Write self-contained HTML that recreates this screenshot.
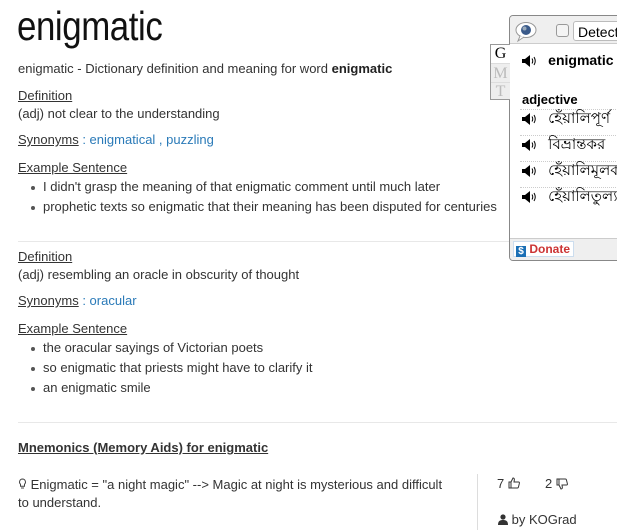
<!DOCTYPE html>
<html><head><meta charset="utf-8"><style>
*{margin:0;padding:0;box-sizing:border-box}
body{width:617px;height:530px;overflow:hidden;background:#fff;font-family:"Liberation Sans",Arial,sans-serif;font-size:13px;color:#333;position:relative}
.a{position:absolute;white-space:nowrap}
.u{text-decoration:underline}
.l{color:#2a7ab8}
.b{font-weight:bold;color:#222}
.bul::before{content:"";position:absolute;left:-12px;top:7px;width:4px;height:4px;border-radius:2px;background:#555}
hr{position:absolute;border:0;border-top:1px solid #e8e8e8}
#pop{position:absolute;left:509px;top:15px;width:120px;height:246px;border:1px solid #888;border-radius:4px;background:#fff;overflow:hidden}
.sp{display:inline-block;vertical-align:middle}
.row{position:absolute;left:12px;width:110px;height:26px;font-family:"Liberation Sans","Noto Sans CJK SC",sans-serif;font-size:15px;color:#000}
</style></head><body>
<div class="a" style="left:17px;top:3px;font-size:41px;color:#111;transform:scaleX(.85);transform-origin:0 0;letter-spacing:-0.5px">enigmatic</div>
<div class="a" style="left:18px;top:61px">enigmatic - Dictionary definition and meaning for word <b class="b">enigmatic</b></div>
<div class="a u" style="left:18px;top:88px">Definition</div>
<div class="a" style="left:18px;top:106px">(adj) not clear to the understanding</div>
<div class="a" style="left:18px;top:132px"><span class="u">Synonyms</span> <span class="l">: enigmatical , puzzling</span></div>
<div class="a u" style="left:18px;top:160px">Example Sentence</div>
<div class="a bul" style="left:43px;top:179px">I didn't grasp the meaning of that enigmatic comment until much later</div>
<div class="a bul" style="left:43px;top:199px">prophetic texts so enigmatic that their meaning has been disputed for centuries</div>
<hr style="left:18px;top:241px;width:599px">
<div class="a u" style="left:18px;top:249px">Definition</div>
<div class="a" style="left:18px;top:267px">(adj) resembling an oracle in obscurity of thought</div>
<div class="a" style="left:18px;top:293px"><span class="u">Synonyms</span> <span class="l">: oracular</span></div>
<div class="a u" style="left:18px;top:321px">Example Sentence</div>
<div class="a bul" style="left:43px;top:340px">the oracular sayings of Victorian poets</div>
<div class="a bul" style="left:43px;top:360px">so enigmatic that priests might have to clarify it</div>
<div class="a bul" style="left:43px;top:380px">an enigmatic smile</div>
<hr style="left:18px;top:422px;width:599px">
<div class="a u" style="left:18px;top:440px;font-weight:bold;color:#333">Mnemonics (Memory Aids) for enigmatic</div>
<div class="a" style="left:18px;top:476px;line-height:18px;white-space:normal;width:438px"><svg width="9" height="12" viewBox="0 0 9 12" style="vertical-align:-1px"><path d="M4.5 1a3 3 0 0 0-2 5.2v2h4v-2A3 3 0 0 0 4.5 1z M3 10h3" fill="none" stroke="#444" stroke-width="1"/></svg> Enigmatic = "a night magic" --&gt; Magic at night is mysterious and difficult to understand.</div>
<div style="position:absolute;left:477px;top:474px;width:1px;height:56px;background:#ddd"></div>
<div class="a" style="left:497px;top:476px">7 <svg width="12" height="12" viewBox="0 0 12 12" style="vertical-align:-1px"><path d="M1 5h2v6H1z M3 5l2-4c1 0 1.5.6 1.3 2L6 5h4.5c.8 0 1 .6.9 1.2l-1 4c-.2.6-.6.8-1 .8H3" fill="none" stroke="#333"/></svg></div>
<div class="a" style="left:545px;top:476px">2 <svg width="12" height="12" viewBox="0 0 12 12" style="vertical-align:-2px"><path d="M1 1h2v6H1z M3 7l2 4c1 0 1.5-.6 1.3-2L6 7h4.5c.8 0 1-.6.9-1.2l-1-4C10.2 1.2 9.8 1 9.4 1H3" fill="none" stroke="#333"/></svg></div>
<div class="a" style="left:498px;top:512px"><svg width="10" height="11" viewBox="0 0 10 11" style="vertical-align:-1px"><circle cx="5" cy="3" r="2.6" fill="#333"/><path d="M0 11c0-4 2-5 5-5s5 1 5 5z" fill="#333"/></svg> by KOGrad</div>

<div id="pop">
 <div style="position:absolute;left:0;top:0;width:120px;height:28px;background:#efefef;border-bottom:1px solid #ccc"></div>
 <svg style="position:absolute;left:4px;top:5px" width="24" height="22" viewBox="0 0 24 22"><ellipse cx="12" cy="9" rx="10" ry="7.5" fill="#fff" stroke="#999"/><path d="M6 15l-2 5 6-4" fill="#fff" stroke="#999"/><circle cx="12" cy="9" r="5" fill="#3a5a8a"/><circle cx="10.5" cy="7.5" r="2" fill="#9ab"/></svg>
 <div style="position:absolute;left:46px;top:8px;width:13px;height:13px;border:1px solid #999;border-radius:3px;background:#f4f4f4"></div>
 <div style="position:absolute;left:63px;top:5px;width:70px;height:20px;border:1px solid #bbb;border-radius:3px;background:#fff;font-size:14px;padding:2px 0 0 4px;color:#000">Detect</div>
 <div class="row" style="top:36px"><svg class="sp" width="14" height="12" viewBox="0 0 14 12"><path d="M0 4h3l5-4v12L3 8H0z" fill="#000"/><path d="M10 3.5q1.5 2.5 0 5M12 2q2.5 4 0 8" fill="none" stroke="#000"/></svg> <b style="margin-left:8px;font-size:14px">enigmatic</b></div>
 <div class="a" style="left:12px;top:76px;font-weight:bold;color:#000">adjective</div>
 <div style="position:absolute;left:10px;top:93px;width:110px;border-top:1px dotted #ccc"></div>
 <div class="row" style="top:91px"><svg class="sp" width="14" height="12" viewBox="0 0 14 12"><path d="M0 4h3l5-4v12L3 8H0z" fill="#000"/><path d="M10 3.5q1.5 2.5 0 5M12 2q2.5 4 0 8" fill="none" stroke="#000"/></svg> <span style="margin-left:8px">হেঁয়ালিপূর্ণ</span></div>
 <div style="position:absolute;left:10px;top:119px;width:110px;border-top:1px dotted #ccc"></div>
 <div class="row" style="top:117px"><svg class="sp" width="14" height="12" viewBox="0 0 14 12"><path d="M0 4h3l5-4v12L3 8H0z" fill="#000"/><path d="M10 3.5q1.5 2.5 0 5M12 2q2.5 4 0 8" fill="none" stroke="#000"/></svg> <span style="margin-left:8px">বিভ্রান্তকর</span></div>
 <div style="position:absolute;left:10px;top:145px;width:110px;border-top:1px dotted #ccc"></div>
 <div class="row" style="top:143px"><svg class="sp" width="14" height="12" viewBox="0 0 14 12"><path d="M0 4h3l5-4v12L3 8H0z" fill="#000"/><path d="M10 3.5q1.5 2.5 0 5M12 2q2.5 4 0 8" fill="none" stroke="#000"/></svg> <span style="margin-left:8px">হেঁয়ালিমূলক</span></div>
 <div style="position:absolute;left:10px;top:171px;width:110px;border-top:1px dotted #ccc"></div>
 <div class="row" style="top:169px"><svg class="sp" width="14" height="12" viewBox="0 0 14 12"><path d="M0 4h3l5-4v12L3 8H0z" fill="#000"/><path d="M10 3.5q1.5 2.5 0 5M12 2q2.5 4 0 8" fill="none" stroke="#000"/></svg> <span style="margin-left:8px">হেঁয়ালিতুল্য</span></div>
 <div style="position:absolute;left:0;top:222px;width:120px;height:24px;background:#efefef;border-top:1px solid #ccc"></div>
 <div style="position:absolute;left:3px;top:225px;height:16px;padding:0 3px 0 2px;background:#fff;border:1px solid #cde;font-size:12px;font-weight:bold;color:#c33;line-height:14px"><span style="display:inline-block;width:10px;height:11px;background:#1a6fb5;color:#fff;font-size:10px;text-align:center;line-height:11px;vertical-align:-1px">$</span> Donate</div>
</div>
<div style="position:absolute;left:490px;top:44px;width:20px;height:56px;border:1px solid #999;border-right:none;background:#eee"></div>
<div style="position:absolute;left:491px;top:45px;width:19px;height:18px;background:#fff;text-align:center;font-family:'Liberation Serif',serif;font-size:16px;color:#000;line-height:17px">G</div>
<div style="position:absolute;left:491px;top:63px;width:19px;height:19px;text-align:center;font-family:'Liberation Serif',serif;font-size:16px;color:#bbb;line-height:19px;border-top:1px solid #ddd">M</div>
<div style="position:absolute;left:491px;top:82px;width:19px;height:18px;text-align:center;font-family:'Liberation Serif',serif;font-size:16px;color:#bbb;line-height:18px;border-top:1px solid #ddd">T</div>
</body></html>
